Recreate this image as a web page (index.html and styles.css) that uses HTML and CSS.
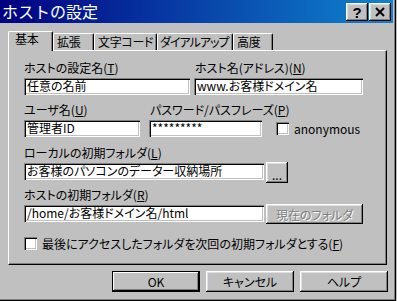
FILE: index.html
```html
<!DOCTYPE html>
<html lang="ja">
<head>
  <meta charset="UTF-8" />
  <title>ホストの設定</title>
  <link rel="stylesheet" href="styles.css">
</head>
<body>
  <div class="window">
    <div class="titlebar">
      <span class="title">ホストの設定</span>
      <div class="title-btns">
        <div class="tbtn">?</div>
        <div class="tbtn">
          <svg width="10" height="10" viewBox="0 0 10 10"><path d="M1 1L9 9M9 1L1 9" stroke="#000" stroke-width="2"/></svg>
        </div>
      </div>
    </div>

    <div class="tabs">
      <div class="tab active t1">基本</div>
      <div class="tab t2">拡張</div>
      <div class="tab t3">文字コード</div>
      <div class="tab t4">ダイアルアップ</div>
      <div class="tab t5">高度</div>
    </div>

    <div class="panel">
      <div class="row">
        <div class="field w-name">
          <div class="lbl">ホストの設定名(<u>T</u>)</div>
          <div class="edit">任意の名前</div>
        </div>
        <div class="field w-host">
          <div class="lbl">ホスト名(アドレス)(<u>N</u>)</div>
          <div class="edit">www.お客様ドメイン名</div>
        </div>
      </div>

      <div class="row row2">
        <div class="field w-user">
          <div class="lbl">ユーザ名(<u>U</u>)</div>
          <div class="edit">管理者ID</div>
        </div>
        <div class="field w-pass">
          <div class="lbl">パスワード/パスフレーズ(<u>P</u>)</div>
          <div class="edit">*********</div>
        </div>
        <div class="check anon">
          <span class="box"></span>
          <span>anonymous</span>
        </div>
      </div>

      <div class="lbl gap3">ローカルの初期フォルダ(<u>L</u>)</div>
      <div class="line">
        <div class="edit w-long">お客様のパソコンのデーター収納場所</div>
        <div class="btn btn-dots">...</div>
      </div>

      <div class="lbl gap4">ホストの初期フォルダ(<u>R</u>)</div>
      <div class="line">
        <div class="edit w-long">/home/お客様ドメイン名/html</div>
        <div class="btn btn-cur disabled">現在のフォルダ</div>
      </div>

      <div class="check last">
        <span class="box"></span>
        <span>最後にアクセスしたフォルダを次回の初期フォルダとする(<u>F</u>)</span>
      </div>
    </div>

    <div class="buttons">
      <div class="btn big default">OK</div>
      <div class="btn big">キャンセル</div>
      <div class="btn big">ヘルプ</div>
    </div>
  </div>
</body>
</html>
```

FILE: styles.css
```css
* {
  box-sizing: border-box;
}
body {
  margin: 0;
  background: #c0c0c0;
  font-family: "Noto Sans CJK JP", "Noto Sans", sans-serif;
  font-size: 12px;
  font-feature-settings: "palt";
  color: #000;
}
.window {
  width: 396px;
  height: 301px;
  padding-right: 3px;
  background: #c0c0c0;
  box-shadow: inset -1px -1px #000, inset -2px -2px #808080;
}

/* title bar */
.titlebar {
  height: 23px;
  display: flex;
  align-items: center;
  justify-content: space-between;
  padding: 0 2px 0 2px;
  background: linear-gradient(to right, #000080, #1084d0);
  color: #fff;
}
.title {
  font-size: 16px;
  line-height: 23px;
  font-feature-settings: normal;
}
.title-btns {
  display: flex;
  gap: 1px;
  margin-top: 1px;
}
.tbtn {
  width: 22px;
  height: 18px;
  display: flex;
  align-items: center;
  justify-content: center;
  background: #c0c0c0;
  color: #000;
  font-family: "Liberation Sans", sans-serif;
  font-weight: bold;
  font-size: 15px;
  box-shadow: inset -1px -1px #000, inset 1px 1px #fff, inset -2px -2px #808080, inset 2px 2px #dfdfdf;
}

/* tabs */
.tabs {
  display: flex;
  align-items: flex-end;
  height: 19px;
  margin: 8px 0 0 8px;
  position: relative;
  z-index: 1;
}
.tab {
  height: 17px;
  padding: 1px 0 0 3px;
  line-height: 14px;
  letter-spacing: -0.3px;
  border-top: 1px solid #fff;
  border-left: 1px solid #fff;
  border-right: 1px solid #000;
  border-top-left-radius: 2px;
  border-top-right-radius: 2px;
  box-shadow: inset -1px 0 #808080;
  background: #c0c0c0;
  white-space: nowrap;
  overflow: hidden;
}
.tab.active {
  height: 20px;
  margin-bottom: -1px;
  padding: 0 0 0 6px;
}
.t1 { width: 45px; }
.t2 { width: 41px; }
.t3 { width: 63px; }
.t4 { width: 76px; letter-spacing: -1px; padding-left: 2px; }
.t5 { width: 40px; }

/* panel */
.panel {
  width: 379px;
  height: 215px;
  margin-left: 8px;
  padding: 10px 0 0 15px;
  border-top: 1px solid #fff;
  border-left: 1px solid #fff;
  border-right: 1px solid #000;
  border-bottom: 1px solid #000;
  box-shadow: inset -1px -1px #808080;
}
.row {
  display: flex;
}
.row2 {
  margin-top: 8px;
  align-items: flex-end;
}
.lbl {
  line-height: 14px;
  height: 14px;
  white-space: nowrap;
}
.field .edit {
  margin-top: 3px;
}
.w-name { width: 166px; }
.w-host { width: 169px; margin-left: 4px; }
.w-user { width: 116px; }
.w-pass { width: 113px; margin-left: 9px; }
.w-host .lbl, .w-pass .lbl {
  padding-left: 1px;
}
.w-long { width: 240px; }

.edit {
  height: 17px;
  padding: 0 0 0 3px;
  line-height: 15px;
  background: #fff;
  white-space: nowrap;
  overflow: hidden;
  box-shadow: inset 1px 1px #808080, inset 2px 2px #000, inset -1px -1px #fff, inset -2px -2px #c0c0c0;
}

.check {
  display: flex;
  align-items: center;
  gap: 5px;
  white-space: nowrap;
}
.box {
  width: 13px;
  height: 13px;
  background: #fff;
  box-shadow: inset 1px 1px #808080, inset 2px 2px #000, inset -1px -1px #fff, inset -2px -2px #c0c0c0;
}
.anon {
  height: 17px;
  margin-left: 14px;
}
.gap3 { margin-top: 9px; }
.gap4 { margin-top: 5px; }
.line {
  display: flex;
  gap: 2px;
  margin-top: 2px;
}
.line .edit {
  margin-top: 1px;
}

.btn {
  display: flex;
  align-items: center;
  justify-content: center;
  background: #c0c0c0;
  white-space: nowrap;
  box-shadow: inset -1px -1px #000, inset 1px 1px #fff, inset -2px -2px #808080, inset 2px 2px #dfdfdf;
}
.btn-dots {
  width: 22px;
  height: 21px;
  align-items: flex-end;
  padding-bottom: 3px;
  line-height: 10px;
}
.btn-cur {
  width: 97px;
  height: 20px;
}
.disabled {
  color: #808080;
  text-shadow: 1px 1px #fff;
}
.check.last {
  margin-top: 12px;
  height: 15px;
}

.buttons {
  display: flex;
  justify-content: flex-end;
  gap: 6px;
  margin-top: 6px;
  padding-right: 5px;
}
.big {
  width: 88px;
  height: 21px;
}
.default {
  box-shadow: inset 0 0 0 1px #000, inset -2px -2px #000, inset 2px 2px #fff, inset -3px -3px #808080;
}
```
